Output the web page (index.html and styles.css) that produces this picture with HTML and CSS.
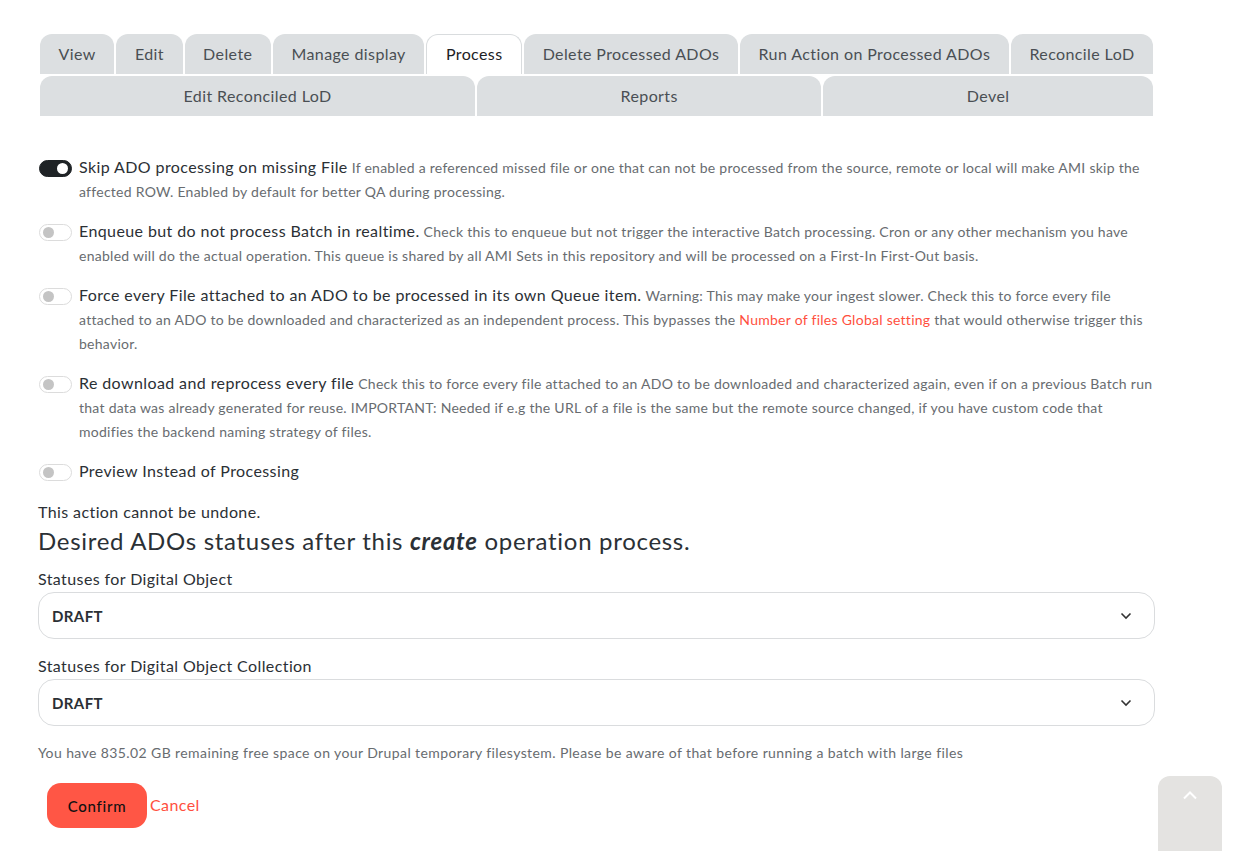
FILE: index.html
```html
<!DOCTYPE html>
<html lang="en">
<head>
<meta charset="utf-8">
<title>Process</title>
<link rel="stylesheet" href="styles.css">
</head>
<body>
<div class="page">
  <nav class="tabs">
    <ul class="tab-row">
      <li class="tab"><a href="#">View</a></li>
      <li class="tab"><a href="#">Edit</a></li>
      <li class="tab"><a href="#">Delete</a></li>
      <li class="tab"><a href="#">Manage display</a></li>
      <li class="tab is-active"><a href="#">Process</a></li>
      <li class="tab"><a href="#">Delete Processed ADOs</a></li>
      <li class="tab"><a href="#">Run Action on Processed ADOs</a></li>
      <li class="tab"><a href="#">Reconcile LoD</a></li>
    </ul>
    <ul class="tab-row">
      <li class="tab"><a href="#">Edit Reconciled LoD</a></li>
      <li class="tab"><a href="#">Reports</a></li>
      <li class="tab"><a href="#">Devel</a></li>
    </ul>
  </nav>

  <form class="form">
    <div class="option">
      <span class="switch is-on"><span class="knob"></span></span>
      <div class="option-text"><span class="option-label">Skip ADO processing on missing File</span> <span class="option-desc">If enabled a referenced missed file or one that can not be processed from the source, remote or local will make AMI skip the affected ROW. Enabled by default for better QA during processing.</span></div>
    </div>
    <div class="option">
      <span class="switch"><span class="knob"></span></span>
      <div class="option-text"><span class="option-label">Enqueue but do not process Batch in realtime.</span> <span class="option-desc">Check this to enqueue but not trigger the interactive Batch processing. Cron or any other mechanism you have enabled will do the actual operation. This queue is shared by all AMI Sets in this repository and will be processed on a First-In First-Out basis.</span></div>
    </div>
    <div class="option">
      <span class="switch"><span class="knob"></span></span>
      <div class="option-text"><span class="option-label">Force every File attached to an ADO to be processed in its own Queue item.</span> <span class="option-desc">Warning: This may make your ingest slower. Check this to force every file attached to an ADO to be downloaded and characterized as an independent process. This bypasses the <a class="link" href="#">Number of files Global setting</a> that would otherwise trigger this behavior.</span></div>
    </div>
    <div class="option">
      <span class="switch"><span class="knob"></span></span>
      <div class="option-text"><span class="option-label">Re download and reprocess every file</span> <span class="option-desc">Check this to force every file attached to an ADO to be downloaded and characterized again, even if on a previous Batch run that data was already generated for reuse. IMPORTANT: Needed if e.g the URL of a file is the same but the remote source changed, if you have custom code that modifies the backend naming strategy of files.</span></div>
    </div>
    <div class="option">
      <span class="switch"><span class="knob"></span></span>
      <div class="option-text"><span class="option-label">Preview Instead of Processing</span></div>
    </div>

    <p class="notice">This action cannot be undone.</p>
    <h2 class="heading">Desired ADOs statuses after this <em>create</em> operation process.</h2>

    <div class="field">
      <label class="field-label">Statuses for Digital Object</label>
      <div class="select">
        <span class="select-value">DRAFT</span>
        <svg class="chevron" width="12" height="8" viewBox="0 0 12 8"><path d="M1.5 1.5 6 6l4.5-4.5" fill="none" stroke="#333" stroke-width="1.6"/></svg>
      </div>
    </div>
    <div class="field">
      <label class="field-label">Statuses for Digital Object Collection</label>
      <div class="select">
        <span class="select-value">DRAFT</span>
        <svg class="chevron" width="12" height="8" viewBox="0 0 12 8"><path d="M1.5 1.5 6 6l4.5-4.5" fill="none" stroke="#333" stroke-width="1.6"/></svg>
      </div>
    </div>

    <p class="space-info">You have 835.02 GB remaining free space on your Drupal temporary filesystem. Please be aware of that before running a batch with large files</p>

    <div class="actions">
      <button type="button" class="btn-confirm">Confirm</button>
      <a class="link cancel" href="#">Cancel</a>
    </div>
  </form>
</div>

<a class="back-top" href="#" aria-label="Back to top">
  <svg width="16" height="10" viewBox="0 0 16 10"><path d="M2 8.5 8 2.5l6 6" fill="none" stroke="#fff" stroke-width="2"/></svg>
</a>
</body>
</html>
```

FILE: styles.css
```css
* { box-sizing: border-box; }

html, body {
  margin: 0;
  padding: 0;
  background: #fff;
}

body {
  font-family: Lato, "Open Sans", sans-serif;
  color: #2b3035;
  letter-spacing: 0.025em;
}

.page {
  width: 1117px;
  margin-left: 38px;
  padding-top: 34px;
}

/* Tabs */
.tabs {
  padding: 0 2px;
}

.tab-row {
  list-style: none;
  margin: 0 0 2px;
  padding: 0;
  display: flex;
  gap: 2px;
}

.tab {
  flex: 1 1 auto;
  background: #dcdfe1;
  border-radius: 12px 12px 0 0;
  text-align: center;
}

.tab a {
  display: block;
  height: 39px;
  line-height: 39px;
  padding: 0 18px;
  color: #4a4f54;
  font-size: 16px;
  text-decoration: none;
  white-space: nowrap;
}

.tab-row + .tab-row .tab a {
  height: 40px;
  line-height: 40px;
}

.tab.is-active {
  background: #fff;
  border: 1px solid #d9dcde;
  border-bottom: 0;
}

.tab.is-active a {
  color: #1d2125;
  line-height: 37px;
}

/* Form */
.form {
  padding-top: 38px;
}

.option {
  display: flex;
  align-items: flex-start;
  gap: 7px;
  margin-bottom: 16px;
}

.switch {
  flex: none;
  position: relative;
  width: 33px;
  height: 17px;
  margin-top: 4px;
  margin-left: 1px;
  border: 1px solid #dcdcdc;
  border-radius: 9px;
  background: #fff;
}

.switch .knob {
  position: absolute;
  top: 2px;
  left: 3px;
  width: 11px;
  height: 11px;
  border-radius: 50%;
  background: #c4c4c4;
}

.switch.is-on {
  background: #1f2326;
  border-color: #1f2326;
}

.switch.is-on .knob {
  left: auto;
  right: 3px;
  background: #fff;
}

.option-text {
  flex: 1;
  font-size: 14px;
  line-height: 24px;
}

.option-label {
  font-size: 16px;
  line-height: 16px;
  color: #2b3035;
}

.option-desc {
  color: #686c70;
  letter-spacing: 0.019em;
}

.link {
  color: #ff4f3e;
  text-decoration: none;
}

.notice {
  margin: 0;
  font-size: 16px;
  line-height: 24px;
  color: #2b3035;
}

.heading {
  margin: 2px 0 11px;
  font-size: 24px;
  font-weight: 400;
  line-height: 30px;
  color: #2b3035;
  letter-spacing: 0.029em;
}

.heading em {
  font-weight: 700;
  font-style: italic;
}

.field {
  margin-bottom: 15px;
}

.field-label {
  display: block;
  font-size: 16px;
  line-height: 24px;
  margin-bottom: 1px;
}

.select {
  display: flex;
  align-items: center;
  justify-content: space-between;
  height: 47px;
  padding: 0 22px 0 13px;
  border: 1px solid #dadcde;
  border-radius: 16px;
  background: #fff;
}

.select-value {
  font-size: 15px;
  font-weight: 700;
  color: #2b3035;
}

.space-info {
  margin: 0 0 18px;
  font-size: 14px;
  line-height: 24px;
  color: #686c70;
}

.actions {
  display: flex;
  align-items: center;
  gap: 3px;
  padding-left: 9px;
}

.btn-confirm {
  width: 100px;
  height: 45px;
  border: 0;
  border-radius: 14px;
  background: #ff5645;
  color: #111;
  font-family: Lato, sans-serif;
  font-size: 15px;
  font-weight: 500;
  letter-spacing: 0.05em;
}

.cancel {
  font-size: 16px;
  line-height: 24px;
  margin-top: -2px;
}

.back-top {
  position: fixed;
  right: 16px;
  bottom: -10px;
  width: 64px;
  height: 85px;
  border-radius: 12px 12px 0 0;
  background: #e4e3e1;
  display: flex;
  justify-content: center;
  padding-top: 14px;
}
```
